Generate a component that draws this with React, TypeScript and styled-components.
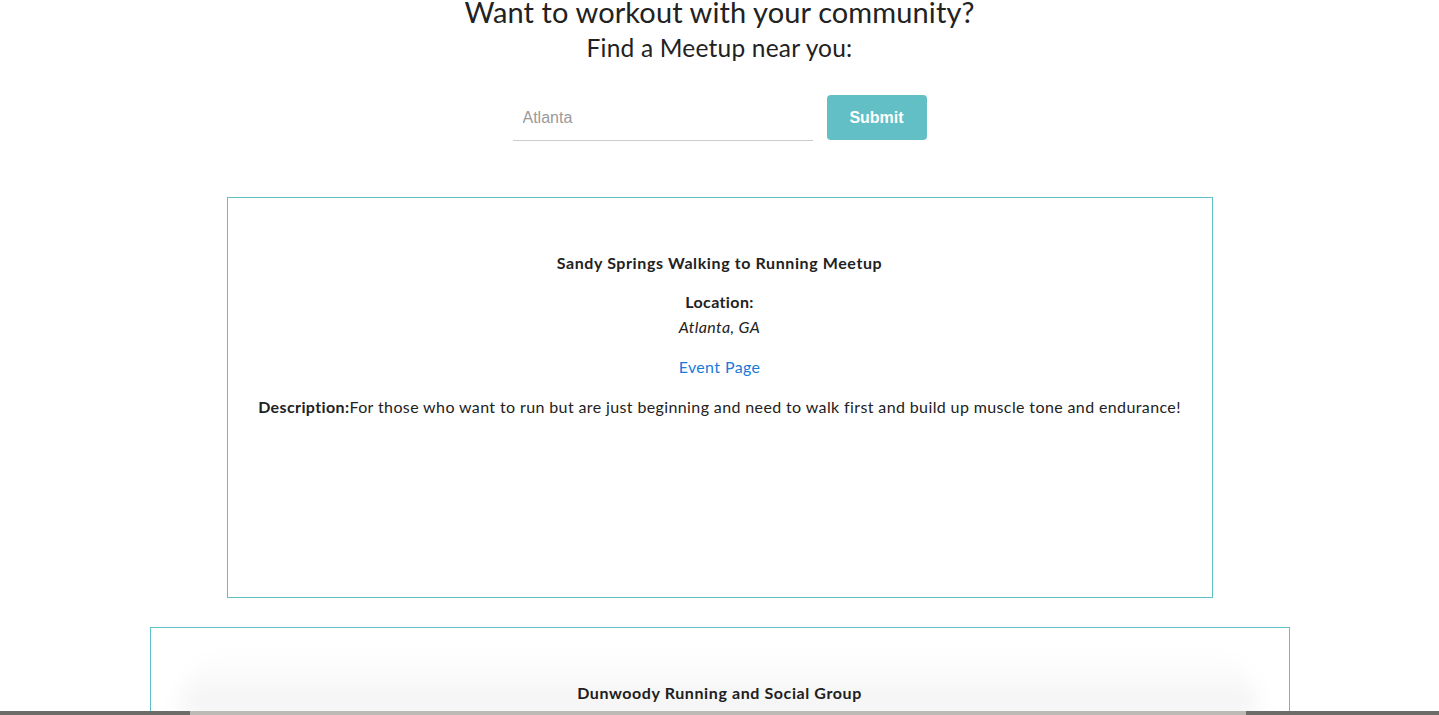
import React from "react";
import styled, { createGlobalStyle } from "styled-components";

const GlobalStyle = createGlobalStyle`
  html, body {
    margin: 0;
    padding: 0;
    background: #ffffff;
    overflow: hidden;
  }
  body {
    font-family: "Lato", "Open Sans", sans-serif;
    color: #222222;
  }
  * { box-sizing: border-box; }
`;

const Page = styled.main`
  display: flex;
  flex-direction: column;
  align-items: center;
  width: 1439px;
  height: 715px;
  overflow: hidden;
`;

const Header = styled.header`
  display: flex;
  flex-direction: column;
  align-items: center;
  margin-top: -5px;
`;

const Title = styled.h1`
  margin: 0;
  font-size: 29px;
  font-weight: 400;
  line-height: 34px;
  letter-spacing: 0.1px;
  color: #222222;
`;

const Subtitle = styled.h2`
  margin: 0;
  font-size: 24.5px;
  font-weight: 400;
  line-height: 38px;
  letter-spacing: 0.2px;
  color: #222222;
`;

const SearchForm = styled.form`
  display: flex;
  align-items: center;
  gap: 14px;
  margin-top: 28px;
`;

const CityInput = styled.input`
  width: 300px;
  height: 46px;
  border: none;
  border-bottom: 1px solid #cccccc;
  padding: 0 10px;
  font-family: "Liberation Sans", Arial, sans-serif;
  font-size: 16px;
  color: #333333;
  outline: none;
  &::placeholder { color: #9a9a9a; }
`;

const SubmitButton = styled.button`
  width: 100px;
  height: 45px;
  border: none;
  border-radius: 4px;
  background: #63bfc6;
  color: #ffffff;
  font-family: "Liberation Sans", Arial, sans-serif;
  font-size: 16px;
  font-weight: 700;
  cursor: pointer;
  margin-top: -1px;
`;

const CardList = styled.section`
  display: flex;
  flex-direction: column;
  align-items: center;
  gap: 29px;
  margin-top: 56px;
`;

const Card = styled.article<{ $width: number }>`
  width: ${(p) => p.$width}px;
  min-height: 401px;
  border: 1px solid #5fc1c7;
  padding: 52px 20px 30px;
  display: flex;
  flex-direction: column;
  align-items: center;
  text-align: center;
  font-size: 16px;
  line-height: 25px;
  letter-spacing: 0.38px;
`;

const CardTitle = styled.h3`
  margin: 0 0 14px;
  font-size: 16px;
  font-weight: 700;
  line-height: 25px;
  letter-spacing: 0.6px;
  color: #222222;
`;

const Label = styled.div`
  font-weight: 700;
`;

const Place = styled.div`
  font-style: italic;
`;

const EventLink = styled.a`
  margin-top: 15px;
  color: #1a7ad9;
  text-decoration: none;
`;

const Description = styled.p`
  margin: 15px 0 0;
  strong { font-weight: 700; }
`;

const Dock = styled.div`
  position: fixed;
  left: 0;
  right: 0;
  bottom: 0;
  height: 4px;
  background: #6d6c68;
  pointer-events: none;
  &::before {
    content: "";
    position: absolute;
    left: 190px;
    right: 193px;
    top: 0;
    bottom: 0;
    background: #bdbab5;
  }
`;

const DockShadow = styled.div`
  position: fixed;
  left: 180px;
  right: 180px;
  bottom: 0;
  height: 64px;
  pointer-events: none;
  border-radius: 60px 60px 0 0;
  background: linear-gradient(to bottom, rgba(0,0,0,0), rgba(0,0,0,0.05));
  filter: blur(10px);
`;

type Meetup = {
  name: string;
  city: string;
  description: string;
  width: number;
};

const meetups: Meetup[] = [
  {
    name: "Sandy Springs Walking to Running Meetup",
    city: "Atlanta, GA",
    description:
      "For those who want to run but are just beginning and need to walk first and build up muscle tone and endurance!",
    width: 986,
  },
  {
    name: "Dunwoody Running and Social Group",
    city: "Atlanta, GA",
    description:
      "A group for runners of all levels in Dunwoody and the surrounding areas who love to run together and hang out afterwards!",
    width: 1140,
  },
];

export default function App() {
  return (
    <>
      <GlobalStyle />
      <Page>
        <Header>
          <Title>Want to workout with your community?</Title>
          <Subtitle>Find a Meetup near you:</Subtitle>
        </Header>
        <SearchForm onSubmit={(e) => e.preventDefault()}>
          <CityInput type="text" placeholder="Atlanta" />
          <SubmitButton type="submit">Submit</SubmitButton>
        </SearchForm>
        <CardList>
          {meetups.map((m) => (
            <Card key={m.name} $width={m.width}>
              <CardTitle>{m.name}</CardTitle>
              <Label>Location:</Label>
              <Place>{m.city}</Place>
              <EventLink href="#">Event Page</EventLink>
              <Description>
                <strong>Description:</strong>
                {m.description}
              </Description>
            </Card>
          ))}
        </CardList>
      </Page>
      <DockShadow />
      <Dock />
    </>
  );
}
